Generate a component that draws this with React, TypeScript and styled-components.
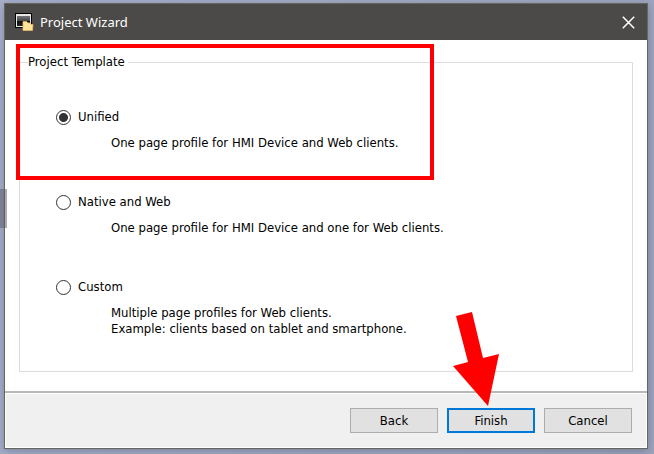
import React, { useState } from "react";
import styled, { createGlobalStyle } from "styled-components";

const GlobalStyle = createGlobalStyle`
  * { box-sizing: border-box; }
  body {
    margin: 0;
    background: linear-gradient(100deg, #a7afca, #9ca4bc);
    color: #000;
    font: 13px/16px "DejaVu Sans Condensed", "Noto Sans", sans-serif;
  }
`;

const Desktop = styled.div`
  position: relative;
  display: flex;
  min-height: 100vh;
  padding: 3px 6px 5px 4px;
`;

const EdgeTab = styled.div`
  position: absolute;
  z-index: 1;
  left: 0;
  top: 189px;
  width: 7px;
  height: 39px;
  background: rgba(90, 90, 100, 0.5);
`;

const Window = styled.main`
  position: relative;
  flex: 1;
  display: flex;
  flex-direction: column;
  border: 1px solid #66655f;
  background: #fff;
  box-shadow: 0 2px 8px rgba(50, 55, 80, 0.35);
`;

const TitleBar = styled.header`
  display: flex;
  align-items: center;
  gap: 6px;
  height: 36px;
  padding: 0 8px 0 10px;
  background: #4c4a48;
  color: #fff;
`;

const Title = styled.h1`
  flex: 1;
  margin: 0;
  font: 13px/18px "Noto Sans", sans-serif;
`;

const CloseButton = styled.button`
  display: flex;
  padding: 4px;
  border: 0;
  background: none;
  color: inherit;
`;

const Content = styled.form`
  flex: 1;
  display: flex;
  flex-direction: column;
`;

const TemplateGroup = styled.fieldset`
  flex: 1;
  min-width: 0;
  margin: 14px 14px 19px 14px;
  padding: 39px 36px 0;
  border: 1px solid #dcdcdc;
`;

const Legend = styled.legend`
  margin-left: -28px;
  padding: 0 3px 0 0;
`;

const Option = styled.div`
  & + & {
    margin-top: 43px;
  }
`;

const OptionLabel = styled.label`
  display: flex;
  align-items: center;
  gap: 7px;
`;

const Radio = styled.input`
  appearance: none;
  width: 15px;
  height: 15px;
  margin: 0;
  border: 1px solid #333;
  border-radius: 50%;
  background: #fff;
  &:checked {
    background: radial-gradient(circle, #333 0 4px, #fff 5px);
  }
`;

const Description = styled.p`
  margin: 10px 0 0 55px;
  white-space: pre-line;
`;

const Footer = styled.footer`
  display: flex;
  justify-content: flex-end;
  gap: 9px;
  padding: 15px;
  border-top: 2px solid #b8b8b8;
  background: #f0f0f0;
  box-shadow: inset 0 0 0 1px #fff;
`;

const ActionSlot = styled.div`
  position: relative;
`;

const ActionButton = styled.button<{ $primary?: boolean }>`
  display: block;
  width: 88px;
  height: 25px;
  padding: 0;
  border: ${(p) => (p.$primary ? "2px solid #0078d7" : "1px solid #adadad")};
  background: #e1e1e1;
  color: #000;
  font: inherit;
`;

const Highlight = styled.div`
  position: absolute;
  left: 11px;
  top: 40px;
  width: 418px;
  height: 136px;
  border: 4px solid #f00;
  pointer-events: none;
`;

const Arrow = styled.svg`
  position: absolute;
  left: 5px;
  bottom: 25px;
  pointer-events: none;
`;

const templates = [
  { id: "unified", name: "Unified", text: "One page profile for HMI Device and Web clients." },
  { id: "native", name: "Native and Web", text: "One page profile for HMI Device and one for Web clients." },
  {
    id: "custom",
    name: "Custom",
    text: "Multiple page profiles for Web clients.\nExample: clients based on tablet and smartphone.",
  },
];

function WizardIcon() {
  return (
    <svg width="19" height="18" viewBox="0 0 19 18" aria-hidden="true">
      <defs>
        <linearGradient id="screen" x1="0" y1="0" x2="0" y2="1">
          <stop offset="0" stopColor="#777" />
          <stop offset="0.5" stopColor="#444" />
          <stop offset="0.55" stopColor="#111" />
          <stop offset="1" stopColor="#222" />
        </linearGradient>
      </defs>
      <rect x="0.5" y="0.5" width="16" height="14" fill="#e8e8e8" stroke="#000" />
      <rect x="2" y="3" width="13" height="10" fill="url(#screen)" />
      <path d="M8 8.5h3.5l1.5 1.5h2l1.5 1.5H18l-.5 6H8z" fill="#ffe49a" stroke="#eebb62" strokeWidth="0.7" />
    </svg>
  );
}

export default function App() {
  const [selected, setSelected] = useState("unified");
  return (
    <Desktop>
      <GlobalStyle />
      <EdgeTab />
      <Window>
        <TitleBar>
          <WizardIcon />
          <Title>Project Wizard</Title>
          <CloseButton type="button" aria-label="Close">
            <svg width="13" height="13" viewBox="0 0 13 13" aria-hidden="true">
              <path d="M0.8 0.8L12.2 12.2M12.2 0.8L0.8 12.2" stroke="currentColor" strokeWidth="1.5" />
            </svg>
          </CloseButton>
        </TitleBar>
        <Content onSubmit={(e) => e.preventDefault()}>
          <TemplateGroup>
            <Legend>Project Template</Legend>
            {templates.map((t) => (
              <Option key={t.id}>
                <OptionLabel>
                  <Radio
                    type="radio"
                    name="template"
                    value={t.id}
                    checked={selected === t.id}
                    aria-describedby={`${t.id}-text`}
                    onChange={() => setSelected(t.id)}
                  />
                  {t.name}
                </OptionLabel>
                <Description id={`${t.id}-text`}>{t.text}</Description>
              </Option>
            ))}
          </TemplateGroup>
          <Footer>
            <ActionButton type="button">Back</ActionButton>
            <ActionSlot>
              <ActionButton type="submit" $primary>Finish</ActionButton>
              <Arrow width="48" height="96" viewBox="0 0 48 96" aria-hidden="true">
                <path d="M4 4L20 0L31 46L47 42L36 94L1 54L16 50Z" fill="#f00" />
              </Arrow>
            </ActionSlot>
            <ActionButton type="button">Cancel</ActionButton>
          </Footer>
        </Content>
        <Highlight />
      </Window>
    </Desktop>
  );
}
